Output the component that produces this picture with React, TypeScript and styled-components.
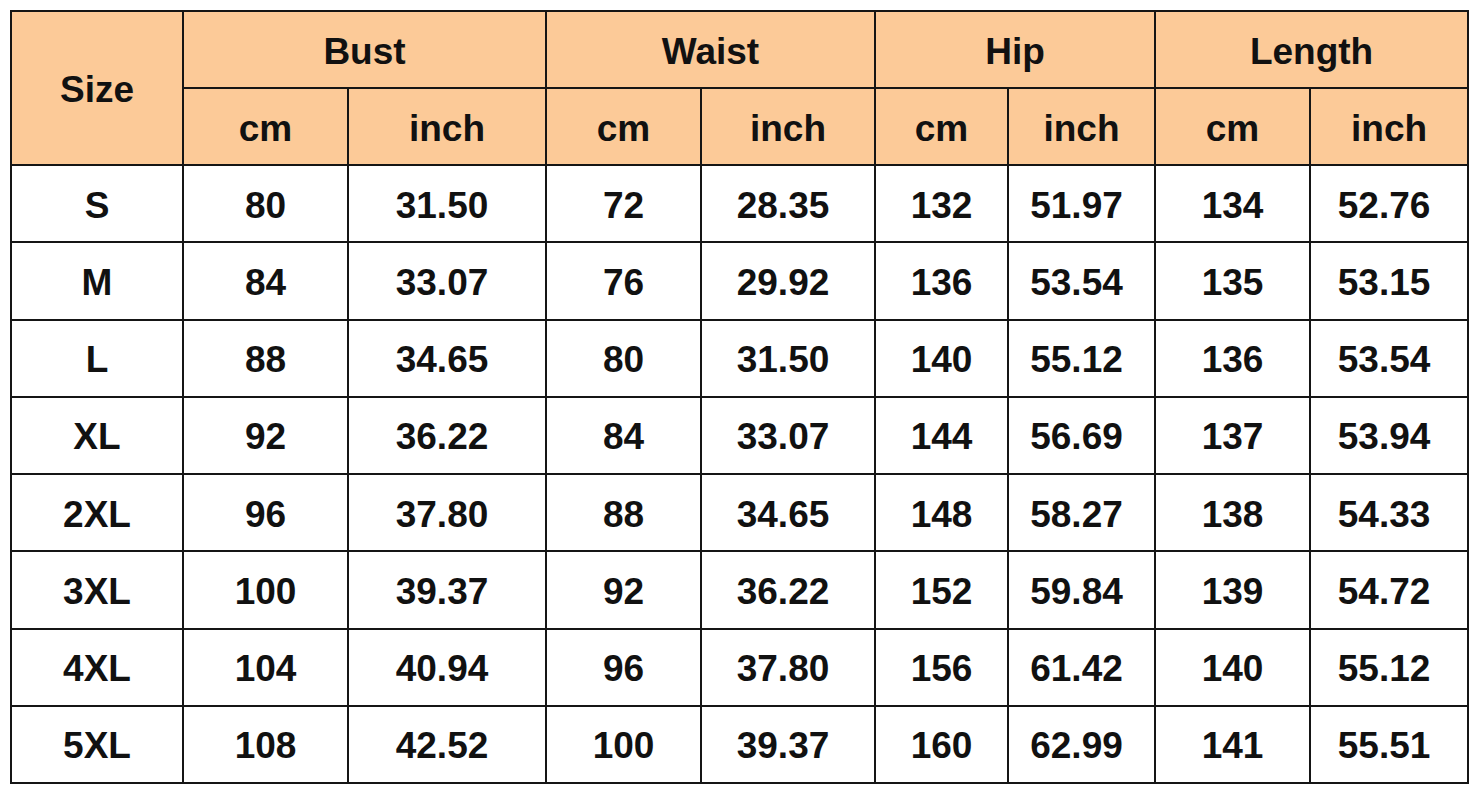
import React from "react";
import styled, { createGlobalStyle } from "styled-components";

const Global = createGlobalStyle`
  html, body { margin: 0; padding: 0; background: #ffffff; }
  body { font-family: "Liberation Sans", Arial, sans-serif; }
`;

const Page = styled.div`
  padding: 10px 0 0 10px;
  width: 1484px;
  height: 800px;
  box-sizing: border-box;
  background: #fff;
`;

const Table = styled.table`
  border-collapse: collapse;
  table-layout: fixed;
  width: 1459px;
  font-family: "Liberation Sans", Arial, sans-serif;
  font-weight: 700;
  color: #111;
`;

const Row = styled.tr`
  height: 77px;
`;

const BodyRow = styled.tr`
  height: 77.25px;
`;

const HeadCell = styled.th`
  background: #fcca98;
  border: 2px solid #151515;
  font-size: 37px;
  font-weight: 700;
  text-align: center;
  vertical-align: middle;
  padding: 3px 0 0 0;
  line-height: 1;
`;

const Cell = styled.td<{ $inch?: boolean }>`
  border: 2px solid #151515;
  font-size: 37px;
  text-align: center;
  vertical-align: middle;
  padding: 3px ${(p) => (p.$inch ? "10px" : "0")} 0 0;
  line-height: 1;
  background: #fff;
`;

const widths = [172, 165, 198, 155, 174, 133, 147, 155, 158];

const groups = ["Bust", "Waist", "Hip", "Length"];

const data: string[][] = [
  ["S", "80", "31.50", "72", "28.35", "132", "51.97", "134", "52.76"],
  ["M", "84", "33.07", "76", "29.92", "136", "53.54", "135", "53.15"],
  ["L", "88", "34.65", "80", "31.50", "140", "55.12", "136", "53.54"],
  ["XL", "92", "36.22", "84", "33.07", "144", "56.69", "137", "53.94"],
  ["2XL", "96", "37.80", "88", "34.65", "148", "58.27", "138", "54.33"],
  ["3XL", "100", "39.37", "92", "36.22", "152", "59.84", "139", "54.72"],
  ["4XL", "104", "40.94", "96", "37.80", "156", "61.42", "140", "55.12"],
  ["5XL", "108", "42.52", "100", "39.37", "160", "62.99", "141", "55.51"],
];

export default function App() {
  return (
    <Page>
      <Global />
      <Table>
        <colgroup>
          {widths.map((w, i) => (
            <col key={i} style={{ width: w }} />
          ))}
        </colgroup>
        <thead>
          <Row>
            <HeadCell rowSpan={2}>Size</HeadCell>
            {groups.map((g) => (
              <HeadCell key={g} colSpan={2}>
                {g}
              </HeadCell>
            ))}
          </Row>
          <Row>
            {groups.map((g) => (
              <React.Fragment key={g}>
                <HeadCell>cm</HeadCell>
                <HeadCell>inch</HeadCell>
              </React.Fragment>
            ))}
          </Row>
        </thead>
        <tbody>
          {data.map((r) => (
            <BodyRow key={r[0]}>
              {r.map((v, i) => (
                <Cell key={i} $inch={i > 0 && i % 2 === 0}>
                  {v}
                </Cell>
              ))}
            </BodyRow>
          ))}
        </tbody>
      </Table>
    </Page>
  );
}
